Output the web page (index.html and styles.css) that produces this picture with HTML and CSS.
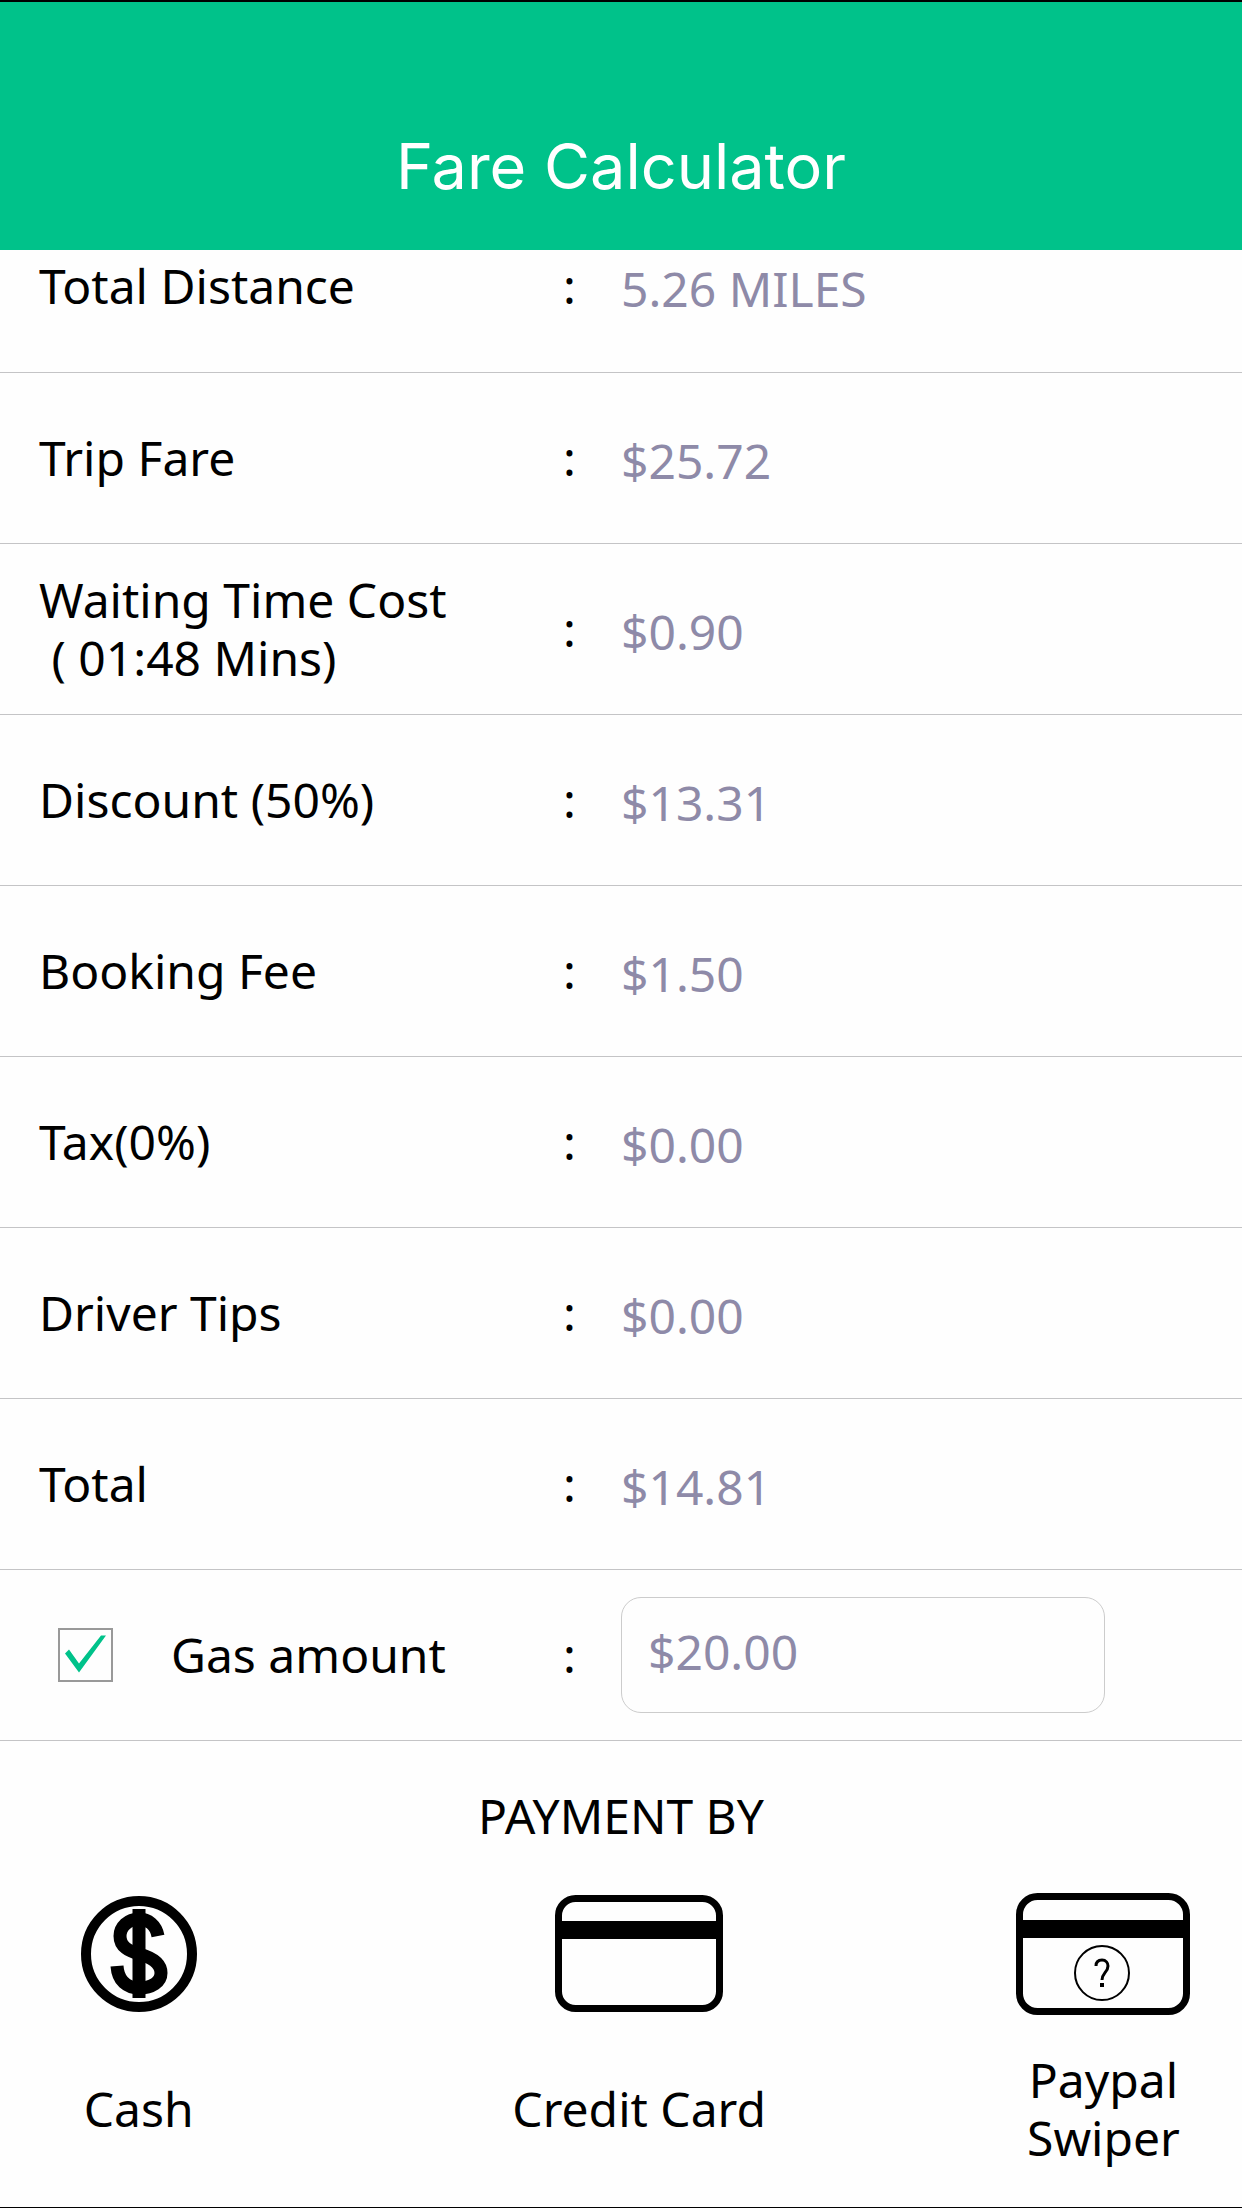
FILE: index.html
```html
<!DOCTYPE html>
<html lang="en">
<head>
<meta charset="UTF-8">
<meta name="viewport" content="width=device-width, initial-scale=1.0">
<title>Fare Calculator</title>
<link rel="stylesheet" href="styles.css">
</head>
<body>
<header class="header">
    <h1 class="title">Fare Calculator</h1>
</header>

<main class="content">
    <table class="fare">
        <tr>
            <th class="name" scope="row">Total Distance</th>
            <td class="colon">:</td>
            <td class="value">5.26 MILES</td>
        </tr>
        <tr>
            <th class="name" scope="row">Trip Fare</th>
            <td class="colon">:</td>
            <td class="value">$25.72</td>
        </tr>
        <tr>
            <th class="name" scope="row">Waiting Time Cost<br>&nbsp;( 01:48 Mins)</th>
            <td class="colon">:</td>
            <td class="value">$0.90</td>
        </tr>
        <tr>
            <th class="name" scope="row">Discount (50%)</th>
            <td class="colon">:</td>
            <td class="value">$13.31</td>
        </tr>
        <tr>
            <th class="name" scope="row">Booking Fee</th>
            <td class="colon">:</td>
            <td class="value">$1.50</td>
        </tr>
        <tr>
            <th class="name" scope="row">Tax(0%)</th>
            <td class="colon">:</td>
            <td class="value">$0.00</td>
        </tr>
        <tr>
            <th class="name" scope="row">Driver Tips</th>
            <td class="colon">:</td>
            <td class="value">$0.00</td>
        </tr>
        <tr>
            <th class="name" scope="row">Total</th>
            <td class="colon">:</td>
            <td class="value">$14.81</td>
        </tr>
        <tr>
            <th class="name" scope="row">
                <label class="gas"><input class="gas-check" type="checkbox" checked>Gas amount</label>
            </th>
            <td class="colon">:</td>
            <td class="field"><input class="gas-input" type="text" value="$20.00" aria-label="Gas amount"></td>
        </tr>
    </table>

    <section class="payment">
        <h2 class="payment-title">PAYMENT BY</h2>
        <div class="methods">
            <button class="method" type="button">
                <svg class="icon" width="118" height="122" viewBox="0 0 118 122" aria-hidden="true">
                    <circle cx="59" cy="61" r="53" fill="none" stroke="#000" stroke-width="10"/>
                    <path d="M78 43C76 32 68 26 59 26C48 26 40 34 40 43C40 54 49 58 59 61C70 64 81 69 81 80C81 89 72 95 59 95C47 95 38 88 37 73" fill="none" stroke="#000" stroke-width="13"/>
                    <path d="M59 16V105" fill="none" stroke="#000" stroke-width="13"/>
                </svg>
                <span class="method-name">Cash</span>
            </button>
            <button class="method" type="button">
                <svg class="icon" width="168" height="122" viewBox="0 0 168 122" aria-hidden="true">
                    <rect x="3.5" y="5.5" width="161" height="110" rx="17" fill="none" stroke="#000" stroke-width="7"/>
                    <path d="M3 28H165V46H3Z"/>
                </svg>
                <span class="method-name">Credit Card</span>
            </button>
            <button class="method" type="button">
                <svg class="icon" width="174" height="122" viewBox="0 0 174 122" aria-hidden="true">
                    <rect x="3.5" y="3.5" width="167" height="115" rx="18" fill="none" stroke="#000" stroke-width="7"/>
                    <path d="M3 27H171V45H3Z"/>
                    <circle cx="86" cy="80" r="27" fill="none" stroke="#000" stroke-width="2"/>
                    <path d="M80 73C80 69 82 67 86 67C90 67 92 70 92 73C92 79 86 80 86 87" fill="none" stroke="#000" stroke-width="3"/>
                    <path d="M84 90H88V94H84Z"/>
                </svg>
                <span class="method-name">Paypal<br>Swiper</span>
            </button>
        </div>
    </section>
</main>
</body>
</html>
```
FILE: styles.css
```css
* {
    box-sizing: border-box;
}

body {
    margin: 0;
    min-height: 100vh;
    display: flex;
    flex-direction: column;
    background-color: #fefefe;
    color: #000;
    border-top: 2px solid #000;
    border-bottom: 2px solid #000;
    font-family: "Noto Sans", sans-serif;
    font-size: 48px;
    line-height: 58px;
}

.header {
    position: relative;
    z-index: 1;
    padding: 124px 40px 44px;
    background-color: #00c28a;
    color: #fff;
    text-align: center;
}

.title {
    margin: 0;
    font-family: Inter, sans-serif;
    font-size: 63px;
    font-weight: 400;
    line-height: 80px;
}

/* the list is scrolled a little way under the header */
.content {
    margin-top: -49px;
}

.fare {
    width: 100%;
    table-layout: fixed;
    border-collapse: collapse;
}

.fare tr {
    height: 171px;
    border-bottom: 1px solid #c4c4c6;
}

.fare th,
.fare td {
    padding: 0;
    text-align: left;
    font-weight: 400;
    vertical-align: middle;
}

.fare .name {
    width: 45%;
    padding-left: 39px;
}

.fare .colon {
    width: 5%;
    padding-left: 4px;
}

.fare .value {
    padding-top: 6px;
    color: #8e8aa8;
}

.gas {
    display: flex;
    align-items: center;
    gap: 58px;
    padding-left: 19px;
}

.gas-check {
    appearance: none;
    width: 55px;
    height: 54px;
    margin: 0;
    border: 2px solid #999;
}

.gas-check:checked::before {
    content: "";
    display: block;
    height: 50px;
    background-color: #00c28a;
    clip-path: polygon(5px 24px, 9px 20px, 19px 34px, 41px 6px, 46px 6px, 19px 43px);
}

.gas-input {
    display: block;
    width: 78%;
    height: 116px;
    padding: 0 26px 6px;
    border: 1px solid #ccc;
    border-radius: 20px;
    background: none;
    color: #8e8aa8;
    font: inherit;
}

.payment {
    padding: 46px 36px 40px 0;
}

.payment-title {
    margin: 0 0 48px 36px;
    font-size: 48px;
    font-weight: 400;
    text-align: center;
}

.methods {
    display: grid;
    grid-template-columns: 23fr 60fr 17fr;
}

.method {
    display: flex;
    flex-direction: column;
    align-items: center;
    gap: 36px;
    padding: 0;
    border: 0;
    background: none;
    color: inherit;
    font: inherit;
}

.icon {
    flex: none;
}

.method-name {
    display: flex;
    align-items: center;
    min-height: 116px;
}
```
